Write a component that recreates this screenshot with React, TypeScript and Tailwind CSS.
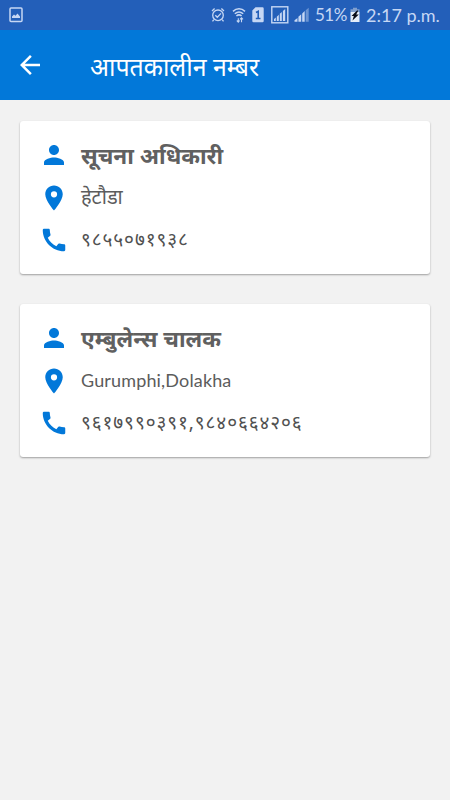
import type { ReactNode } from "react";
import { MdArrowBack, MdCall, MdLocationOn, MdPerson } from "react-icons/md";

interface Contact {
  name: string;
  place: string;
  placeClass: string;
  phone: string;
}

const CONTACTS: Contact[] = [
  {
    name: "सूचना अधिकारी",
    place: "हेटौडा",
    placeClass: "text-[20px] -mt-0.5",
    phone: "९८५५०७१९३८",
  },
  {
    name: "एम्बुलेन्स चालक",
    place: "Gurumphi,Dolakha",
    placeClass: "font-['Lato',sans-serif] text-[18px] tracking-[0.15px]",
    phone: "९६१७९९०३९१,९८४०६६४२०६",
  },
];

function StatusBar() {
  return (
    <div className="flex h-[30px] items-center bg-[#235fb9] font-['Lato',sans-serif] text-[#c6d7f4]">
      <svg className="ml-[9px] shrink-0" width="14" height="16" viewBox="0 0 14 16">
        <rect x="1" y="1" width="12" height="13.5" rx="1" fill="none" stroke="currentColor" strokeWidth="1.5" />
        <path d="M3 11V9.5l2-2 1.5 1.2L8.5 6.5 11 9.5V11z" fill="currentColor" />
      </svg>

      {/* alarm */}
      <svg className="ml-[188px] shrink-0" width="14" height="16" viewBox="0 0 14 16" fill="none" stroke="currentColor">
        <circle cx="7" cy="8.3" r="5.3" strokeWidth="1.3" />
        <path d="M1 4l2.6-2.4M13 4l-2.6-2.4M2.8 12.6L1.5 14.3M11.2 12.6l1.3 1.7" strokeWidth="1.3" />
        <path d="M4.3 8.2l2 2 3.7-3.8" strokeWidth="1.3" />
      </svg>

      {/* wifi */}
      <svg className="ml-[7px] shrink-0" width="14" height="16" viewBox="0 0 14 16" fill="none" stroke="currentColor">
        <path d="M1 4.4C4.5 1 9.5 1 13 4.4" strokeWidth="1.5" />
        <path d="M2.8 6.8c2.6-2.3 5.8-2.3 8.4 0" strokeWidth="1.5" />
        <path d="M4.4 9c1.6-1.4 3.6-1.4 5.2 0" strokeWidth="1.5" />
        <path d="M6.3 15v-3.7M4.8 13.5l1.5 1.6 1.4-1.6M9.5 15.2v-4M8 12.3l1.5-1.5 1.5 1.5" strokeWidth="1.1" />
      </svg>

      {/* sim slot */}
      <svg className="ml-[6px] shrink-0" width="12" height="16" viewBox="0 0 12 16">
        <path d="M3.5.3h7a1.2 1.2 0 011.2 1.2v12.5a1.2 1.2 0 01-1.2 1.2h-9A1.2 1.2 0 01.3 14V3.5z" fill="currentColor" />
        <path d="M4 5.5l2.2-1.2v7.2M3.8 11.5h4.7" fill="none" stroke="#235fb9" strokeWidth="1.6" />
      </svg>

      <svg className="ml-[7px] shrink-0" width="18" height="18" viewBox="0 0 18 18">
        <rect x=".8" y=".8" width="16" height="16" fill="none" stroke="currentColor" strokeWidth="1.4" />
        <path d="M3 15v-2l1.8-1.5V15zM5.8 15v-4.3l2-1.9V15zM8.8 15V7.8l2-1.8v9zM11.9 15V5l2.3-2v12z" fill="currentColor" />
      </svg>

      <svg className="ml-[5px] shrink-0" width="16" height="16" viewBox="0 0 16 16" fill="currentColor">
        <path d="M.5 14.8v-1.5L3.5 11v3.8zM4.4 14.8V9.7l2.8-2.4v7.5z" />
        <path d="M8.2 14.8V6.4L10.7 4v10.8z" />
        <path d="M11.7 14.8V3.2L14.7.8v14z" opacity=".45" />
      </svg>

      <span className="ml-[5px] w-[33px] whitespace-nowrap text-[17px] leading-[30px] tracking-[-0.5px]">51%</span>

      {/* battery */}
      <svg className="ml-[2px] shrink-0" width="10" height="16" viewBox="0 0 10 16">
        <path d="M3 .8h4v1.5h2.5V5H.5V2.3H3z" fill="#7f9fce" />
        <path d="M.5 5h9v10h-9z" fill="#e4edf9" />
        <path d="M7 3.5L1.5 9h2.3L2.5 13.5 8.8 7.5H6.2L8.3 3.5z" fill="#080d19" />
      </svg>

      <span className="ml-[6px] whitespace-nowrap text-[18px] leading-[30px]">2:17 p.m.</span>
    </div>
  );
}

function Row({ icon, children }: { icon: ReactNode; children: ReactNode }) {
  return (
    <div className="flex h-[30px] items-center gap-3 text-[#0278d9]">
      {icon}
      {children}
    </div>
  );
}

function ContactCard({ contact }: { contact: Contact }) {
  return (
    <article className="flex h-[153px] flex-col gap-[12.5px] rounded-[3px] bg-white px-[19px] pt-[19px] shadow-[0_1px_2px_rgba(0,0,0,0.35)]">
      <Row icon={<MdPerson size={30} />}>
        <h2 className="pt-0.5 whitespace-nowrap text-[22.6px] font-bold text-[#606060]">{contact.name}</h2>
      </Row>
      <Row icon={<MdLocationOn size={30} />}>
        <p className={`whitespace-nowrap text-[#5c5c5c] ${contact.placeClass}`}>{contact.place}</p>
      </Row>
      <Row icon={<MdCall size={30} />}>
        <p className="-mt-0.5 whitespace-nowrap text-[19px] tracking-[0.9px] text-[#505050]">{contact.phone}</p>
      </Row>
    </article>
  );
}

export default function App() {
  return (
    <div
      lang="hi"
      className="min-h-screen w-full overflow-hidden bg-[#f2f2f2] font-['Noto_Sans','Noto_Sans_Devanagari',sans-serif]"
    >
      <StatusBar />
      <header className="flex h-[70px] items-center bg-[#0278d9] pl-[15px] text-white">
        <MdArrowBack size={30} />
        <h1 className="ml-[45px] pt-[3px] whitespace-nowrap text-[24.9px]">आपतकालीन नम्बर</h1>
      </header>
      <main className="flex flex-col gap-[30px] px-5 pt-[21px]">
        {CONTACTS.map((contact) => (
          <ContactCard key={contact.name} contact={contact} />
        ))}
      </main>
    </div>
  );
}
